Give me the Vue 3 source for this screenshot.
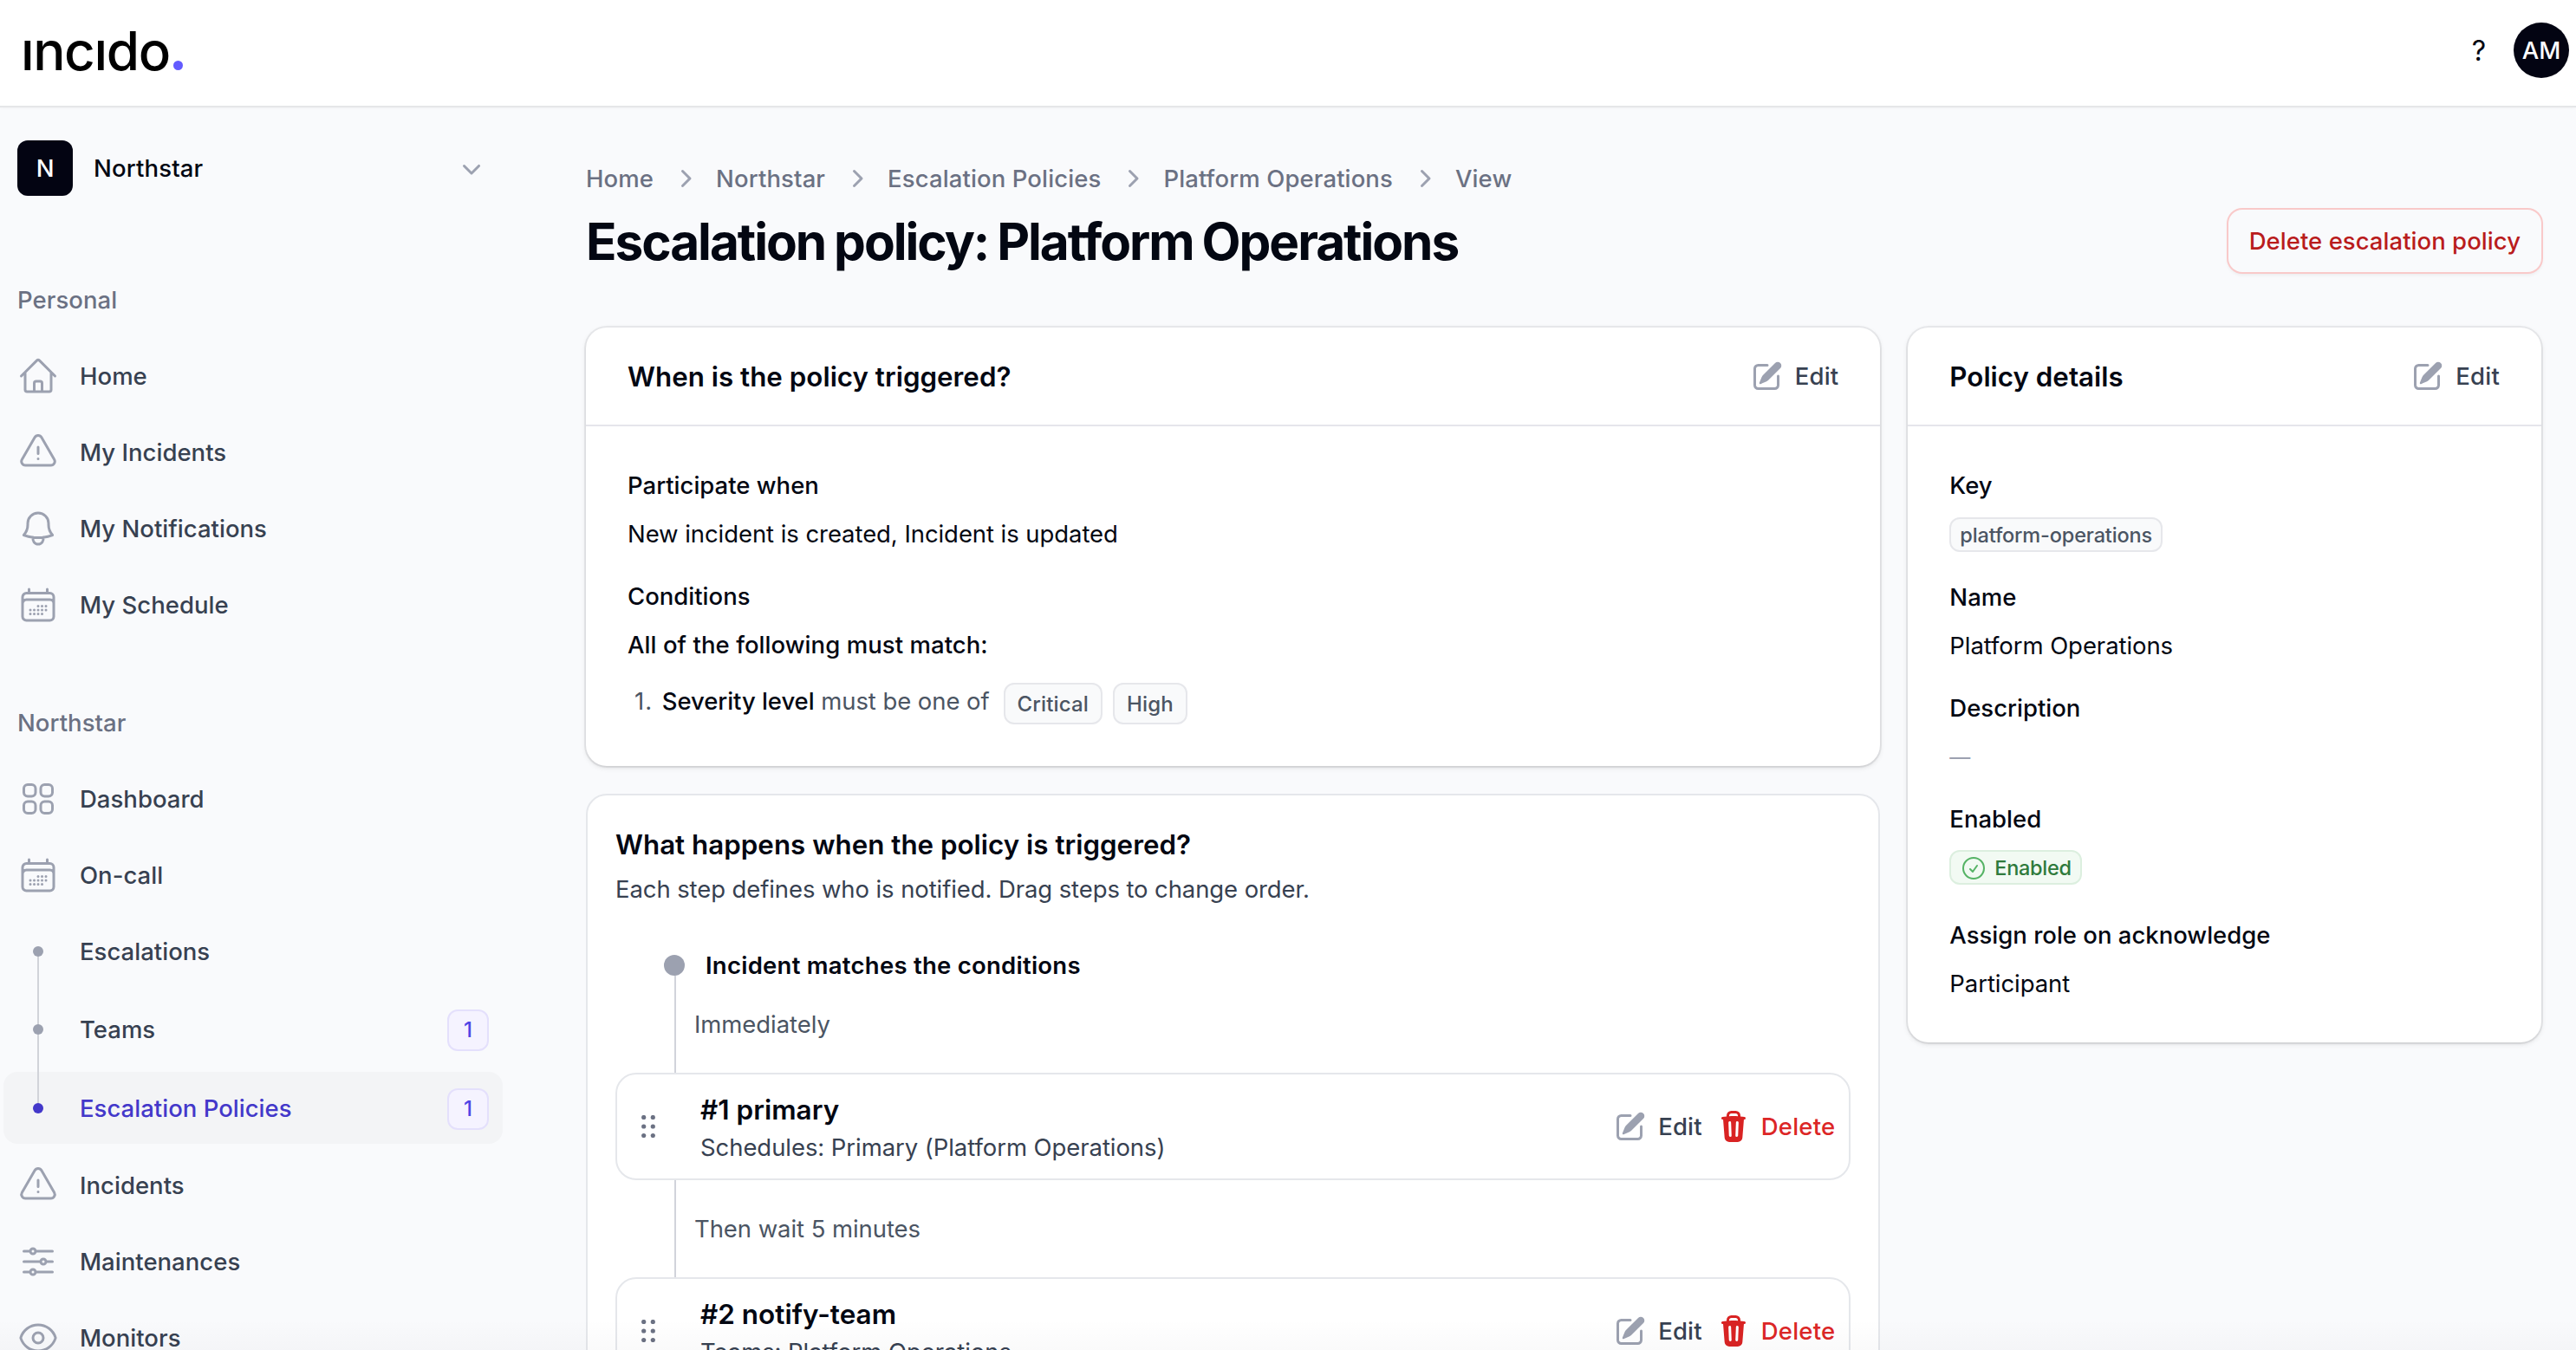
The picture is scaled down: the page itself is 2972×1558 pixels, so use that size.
<script setup>
const icons = {
  home: 'm2.25 12 8.954-8.955c.44-.439 1.152-.439 1.591 0L21.75 12M4.5 9.75v10.125c0 .621.504 1.125 1.125 1.125H9.75v-4.875c0-.621.504-1.125 1.125-1.125h2.25c.621 0 1.125.504 1.125 1.125V21h4.125c.621 0 1.125-.504 1.125-1.125V9.75M8.25 21h8.25',
  alert: 'M12 9v3.75m-9.303 3.376c-.866 1.5.217 3.374 1.948 3.374h14.71c1.73 0 2.813-1.874 1.948-3.374L13.949 3.378c-.866-1.5-3.032-1.5-3.898 0L2.697 16.126ZM12 15.75h.007v.008H12v-.008Z',
  bell: 'M14.857 17.082a23.848 23.848 0 0 0 5.454-1.31A8.967 8.967 0 0 1 18 9.75V9A6 6 0 0 0 6 9v.75a8.967 8.967 0 0 1-2.312 6.022c1.733.64 3.56 1.085 5.455 1.31m5.714 0a24.255 24.255 0 0 1-5.714 0m5.714 0a3 3 0 1 1-5.714 0',
  calendar: 'M6.75 3v2.25M17.25 3v2.25M3 18.75V7.5a2.25 2.25 0 0 1 2.25-2.25h13.5A2.25 2.25 0 0 1 21 7.5v11.25m-18 0A2.25 2.25 0 0 0 5.25 21h13.5A2.25 2.25 0 0 0 21 18.75m-18 0v-7.5A2.25 2.25 0 0 1 5.25 9h13.5A2.25 2.25 0 0 1 21 11.25v7.5m-9-6h.008v.008H12v-.008ZM12 15h.008v.008H12V15Zm0 2.25h.008v.008H12v-.008ZM9.75 15h.008v.008H9.75V15Zm0 2.25h.008v.008H9.75v-.008ZM7.5 15h.008v.008H7.5V15Zm0 2.25h.008v.008H7.5v-.008Zm6.75-4.5h.008v.008h-.008v-.008Zm0 2.25h.008v.008h-.008V15Zm0 2.25h.008v.008h-.008v-.008Zm2.25-4.5h.008v.008H16.5v-.008Zm0 2.25h.008v.008H16.5V15Z',
  squares: 'M3.75 6A2.25 2.25 0 0 1 6 3.75h2.25A2.25 2.25 0 0 1 10.5 6v2.25a2.25 2.25 0 0 1-2.25 2.25H6a2.25 2.25 0 0 1-2.25-2.25V6ZM3.75 15.75A2.25 2.25 0 0 1 6 13.5h2.25a2.25 2.25 0 0 1 2.25 2.25V18a2.25 2.25 0 0 1-2.25 2.25H6A2.25 2.25 0 0 1 3.75 18v-2.25ZM13.5 6a2.25 2.25 0 0 1 2.25-2.25H18A2.25 2.25 0 0 1 20.25 6v2.25A2.25 2.25 0 0 1 18 10.5h-2.25a2.25 2.25 0 0 1-2.25-2.25V6ZM13.5 15.75a2.25 2.25 0 0 1 2.25-2.25H18a2.25 2.25 0 0 1 2.25 2.25V18A2.25 2.25 0 0 1 18 20.25h-2.25A2.25 2.25 0 0 1 13.5 18v-2.25Z',
  sliders: 'M10.5 6h9.75M10.5 6a1.5 1.5 0 1 1-3 0m3 0a1.5 1.5 0 1 0-3 0M3.75 6H7.5m3 12h9.75m-9.75 0a1.5 1.5 0 0 1-3 0m3 0a1.5 1.5 0 0 0-3 0m-3.75 0H7.5m9-6h3.75m-3.75 0a1.5 1.5 0 0 1-3 0m3 0a1.5 1.5 0 0 0-3 0m-9.75 0h9.75',
  eye: 'M2.036 12.322a1.012 1.012 0 0 1 0-.639C3.423 7.51 7.36 4.5 12 4.5c4.638 0 8.573 3.007 9.963 7.178.07.207.07.431 0 .639C20.577 16.49 16.64 19.5 12 19.5c-4.638 0-8.573-3.007-9.963-7.178ZM15 12a3 3 0 1 1-6 0 3 3 0 0 1 6 0Z',
  check: 'M9 12.75 11.25 15 15 9.75M21 12a9 9 0 1 1-18 0 9 9 0 0 1 18 0Z',
}
const pencil =
  'm5.433 13.917 1.262-3.155A4 4 0 0 1 7.58 9.42l6.92-6.918a2.121 2.121 0 0 1 3 3l-6.92 6.918c-.383.383-.84.685-1.343.886l-3.154 1.262a.5.5 0 0 1-.65-.65ZM3.5 5.75c0-.69.56-1.25 1.25-1.25H10A.75.75 0 0 0 10 3H4.75A2.75 2.75 0 0 0 2 5.75v9.5A2.75 2.75 0 0 0 4.75 18h9.5A2.75 2.75 0 0 0 17 15.25V10a.75.75 0 0 0-1.5 0v5.25c0 .69-.56 1.25-1.25 1.25h-9.5c-.69 0-1.25-.56-1.25-1.25v-9.5Z'
const trash =
  'M8.75 1A2.75 2.75 0 0 0 6 3.75v.443c-.795.077-1.584.176-2.365.298a.75.75 0 1 0 .23 1.482l.149-.022.841 10.518A2.75 2.75 0 0 0 7.596 19h4.807a2.75 2.75 0 0 0 2.742-2.53l.841-10.52.149.023a.75.75 0 0 0 .23-1.482A41.03 41.03 0 0 0 14 4.193V3.75A2.75 2.75 0 0 0 11.25 1h-2.5ZM10 4c.84 0 1.673.025 2.5.075V3.75c0-.69-.56-1.25-1.25-1.25h-2.5c-.69 0-1.25.56-1.25 1.25v.325C8.327 4.025 9.16 4 10 4ZM8.58 7.72a.75.75 0 0 0-1.5.06l.3 7.5a.75.75 0 1 0 1.5-.06l-.3-7.5Zm4.34.06a.75.75 0 1 0-1.5-.06l-.3 7.5a.75.75 0 1 0 1.5.06l.3-7.5Z'
const chevronRight =
  'M8.22 5.22a.75.75 0 0 1 1.06 0l4.25 4.25a.75.75 0 0 1 0 1.06l-4.25 4.25a.75.75 0 0 1-1.06-1.06L11.94 10 8.22 6.28a.75.75 0 0 1 0-1.06Z'
const chevronDown =
  'M5.22 8.22a.75.75 0 0 1 1.06 0L10 11.94l3.72-3.72a.75.75 0 1 1 1.06 1.06l-4.25 4.25a.75.75 0 0 1-1.06 0L5.22 9.28a.75.75 0 0 1 0-1.06Z'

const groups = [
  {
    label: 'Personal',
    items: [
      { text: 'Home', icon: 'home' },
      { text: 'My Incidents', icon: 'alert' },
      { text: 'My Notifications', icon: 'bell' },
      { text: 'My Schedule', icon: 'calendar' },
    ],
  },
  {
    label: 'Northstar',
    items: [
      { text: 'Dashboard', icon: 'squares' },
      { text: 'On-call', icon: 'calendar' },
      { text: 'Escalations', sub: 'first' },
      { text: 'Teams', sub: 'mid', badge: 1 },
      { text: 'Escalation Policies', sub: 'last', badge: 1, active: true },
      { text: 'Incidents', icon: 'alert' },
      { text: 'Maintenances', icon: 'sliders' },
      { text: 'Monitors', icon: 'eye' },
    ],
  },
]
const crumbs = ['Home', 'Northstar', 'Escalation Policies', 'Platform Operations', 'View']
const steps = [
  { wait: 'Immediately', title: '#1 primary', detail: 'Schedules: Primary (Platform Operations)' },
  { wait: 'Then wait 5 minutes', title: '#2 notify-team', detail: 'Teams: Platform Operations' },
]
</script>

<template>
  <div class="app">
    <header class="topbar">
      <div class="logo"><span>ıncıdo</span><i class="logo-dot"></i></div>
      <div class="top-actions">
        <span class="help">?</span>
        <span class="avatar">AM</span>
      </div>
    </header>

    <div class="body">
      <aside class="sidebar">
        <div class="tenant">
          <span class="tenant-logo">N</span>
          <span class="tenant-name">Northstar</span>
          <svg class="mini" viewBox="0 0 20 20"><path :d="chevronDown" /></svg>
        </div>
        <nav>
          <section v-for="g in groups" :key="g.label" class="group">
            <div class="group-label">{{ g.label }}</div>
            <ul class="items">
              <li v-for="it in g.items" :key="it.text" class="item" :class="{ active: it.active, badged: it.badge }">
                <svg v-if="it.icon" class="outline" viewBox="0 0 24 24"><path :d="icons[it.icon]" /></svg>
                <span v-else class="rail" :class="it.sub"><i class="dot"></i></span>
                <span class="item-text">{{ it.text }}</span>
                <span v-if="it.badge" class="count">{{ it.badge }}</span>
              </li>
            </ul>
          </section>
        </nav>
      </aside>

      <main class="main">
        <div class="crumbs">
          <template v-for="(c, i) in crumbs" :key="c">
            <svg v-if="i" class="mini" viewBox="0 0 20 20"><path :d="chevronRight" /></svg>
            <span>{{ c }}</span>
          </template>
        </div>
        <div class="heading">
          <h1>Escalation policy: Platform Operations</h1>
          <button class="danger-btn">Delete escalation policy</button>
        </div>

        <div class="grid">
          <div class="col">
            <section class="card">
              <div class="card-head">
                <h2>When is the policy triggered?</h2>
                <span class="link"><svg class="mini" viewBox="0 0 20 20"><path :d="pencil" /></svg>Edit</span>
              </div>
              <div class="card-body">
                <div class="entry">
                  <div class="label">Participate when</div>
                  <div class="value">New incident is created, Incident is updated</div>
                </div>
                <div class="entry">
                  <div class="label">Conditions</div>
                  <div class="value strong">All of the following must match:</div>
                </div>
                <div class="rule">
                  <span class="rule-text"><span class="num">1.</span> <b>Severity level</b> must be one of</span>
                  <span class="tag big">Critical</span>
                  <span class="tag big">High</span>
                </div>
              </div>
            </section>

            <section class="flow">
              <h2>What happens when the policy is triggered?</h2>
              <p class="flow-sub">Each step defines who is notified. Drag steps to change order.</p>
              <div class="start"><i class="start-dot"></i><span>Incident matches the conditions</span></div>
              <template v-for="s in steps" :key="s.title">
                <div class="wait">{{ s.wait }}</div>
                <div class="step">
                  <svg class="grip" viewBox="0 0 16 26">
                    <template v-for="y in [2.5, 13, 23.5]" :key="y">
                      <circle cx="2.7" :cy="y" r="2.6" /><circle cx="13.3" :cy="y" r="2.6" />
                    </template>
                  </svg>
                  <div class="step-main">
                    <div class="step-title">{{ s.title }}</div>
                    <div class="step-detail">{{ s.detail }}</div>
                  </div>
                  <div class="step-actions">
                    <span class="link"><svg class="mini" viewBox="0 0 20 20"><path :d="pencil" /></svg>Edit</span>
                    <span class="link red"><svg class="mini" viewBox="0 0 20 20"><path :d="trash" /></svg>Delete</span>
                  </div>
                </div>
              </template>
            </section>
          </div>

          <section class="card details">
            <div class="card-head">
              <h2>Policy details</h2>
              <span class="link"><svg class="mini" viewBox="0 0 20 20"><path :d="pencil" /></svg>Edit</span>
            </div>
            <div class="card-body">
              <div class="entry">
                <div class="label">Key</div>
                <div class="value key-row"><span class="tag">platform-operations</span></div>
              </div>
              <div class="entry">
                <div class="label">Name</div>
                <div class="value">Platform Operations</div>
              </div>
              <div class="entry">
                <div class="label">Description</div>
                <div class="value muted">—</div>
              </div>
              <div class="entry">
                <div class="label">Enabled</div>
                <div class="value enabled-row">
                  <span class="tag green"><svg viewBox="0 0 24 24"><path :d="icons.check" /></svg>Enabled</span>
                </div>
              </div>
              <div class="entry">
                <div class="label">Assign role on acknowledge</div>
                <div class="value">Participant</div>
              </div>
            </div>
          </section>
        </div>
      </main>
    </div>
    <div class="edge-fade"></div>
  </div>
</template>

<style>
html,
body {
  margin: 0;
  overflow: hidden;
  background: #f9fafc;
}
</style>

<style scoped>
* {
  box-sizing: border-box;
}
.app {
  width: 2972px;
  height: 1558px;
  overflow: hidden;
  position: relative;
  display: flex;
  flex-direction: column;
  background: #f9fafc;
  color: #030712;
  font-family: Inter, "Liberation Sans", sans-serif;
  font-size: 27.5px;
  line-height: 40px;
  letter-spacing: -0.07px;
}
h1,
h2,
p,
ul {
  margin: 0;
  padding: 0;
}
.mini {
  width: 40px;
  height: 40px;
  flex: none;
  fill: #9ca1b0;
  fill-rule: evenodd;
}
.topbar {
  flex: none;
  height: 124px;
  padding: 0 8px 6px 24px;
  display: flex;
  align-items: center;
  justify-content: space-between;
  background: #fff;
  border-bottom: 2px solid #e5e6e8;
  box-shadow: 0 1px 3px rgba(0, 0, 0, 0.03);
}
.logo {
  display: flex;
  align-items: baseline;
  color: #000;
  font-size: 62px;
  line-height: 72px;
  font-weight: 500;
  letter-spacing: -1.4px;
  padding-top: 1px;
}
.logo-dot {
  width: 11px;
  height: 11px;
  border-radius: 50%;
  background: #635bff;
  margin-left: 4px;
}
.top-actions {
  display: flex;
  align-items: center;
  gap: 32px;
}
.help {
  font-size: 32px;
  padding-top: 2px;
}
.avatar,
.tenant-logo {
  width: 64px;
  height: 64px;
  display: flex;
  align-items: center;
  justify-content: center;
  background: #030412;
  color: #fff;
  font-weight: 500;
}
.avatar {
  border-radius: 50%;
}
.body {
  flex: 1;
  min-height: 0;
  display: flex;
}
.sidebar {
  width: 676px;
  flex: none;
  padding: 38px 96px 0 4px;
}
.tenant {
  height: 64px;
  display: flex;
  align-items: center;
  padding: 0 16px;
  gap: 24px;
  margin-bottom: 96px;
}
.tenant-logo {
  border-radius: 12px;
}
.tenant-name {
  flex: 1;
  font-weight: 500;
  letter-spacing: 0.15px;
}
.group {
  margin-bottom: 72px;
}
.group-label {
  height: 48px;
  line-height: 48px;
  padding-left: 16px;
  font-weight: 500;
  color: #6b7183;
  margin-bottom: 24px;
  letter-spacing: 0.05px;
}
.items {
  list-style: none;
  display: flex;
  flex-direction: column;
  gap: 8px;
}
.item {
  height: 80px;
  flex: none;
  display: flex;
  align-items: center;
  gap: 24px;
  padding: 0 16px;
  border-radius: 16px;
  font-weight: 500;
  color: #374151;
  letter-spacing: 0.02px;
}
.item.badged {
  height: 83px;
  padding-top: 1px;
}
.item.active {
  background: #f3f4f6;
  color: #4338ca;
}
.item-text {
  flex: 1;
}
.outline {
  width: 48px;
  height: 48px;
  fill: none;
  stroke: #9ca1b0;
  stroke-width: 1.5;
  stroke-linecap: round;
  stroke-linejoin: round;
}
.rail {
  width: 48px;
  align-self: stretch;
  display: flex;
  align-items: center;
  justify-content: center;
  position: relative;
}
.rail::before {
  content: "";
  position: absolute;
  left: 23px;
  width: 2px;
  top: -5px;
  bottom: -4px;
  background: #d1d3d9;
}
.rail.first::before {
  top: 50%;
}
.rail.last::before {
  bottom: 50%;
}
.dot {
  position: relative;
  width: 12px;
  height: 12px;
  border-radius: 50%;
  background: #9ca1b0;
}
.active .dot {
  background: #4338ca;
}
.count {
  width: 48px;
  height: 48px;
  margin-top: 2px;
  display: flex;
  align-items: center;
  justify-content: center;
  border: 2px solid #e4e0fc;
  border-radius: 12px;
  background: #f5f3ff;
  color: #4f46e5;
  font-size: 24px;
}
.main {
  flex: 1;
  padding: 62px 40px 0 0;
}
.crumbs {
  display: flex;
  align-items: center;
  gap: 16px;
  height: 40px;
  font-weight: 500;
  color: #6b7183;
  margin-bottom: 16px;
  letter-spacing: 0.11px;
}
.heading {
  height: 72px;
  display: flex;
  align-items: center;
  justify-content: space-between;
  margin-bottom: 64px;
}
h1 {
  font-size: 58.5px;
  height: 72px;
  line-height: 73px;
  font-weight: 700;
  letter-spacing: -2.04px;
  word-spacing: -2px;
}
.danger-btn {
  height: 72px;
  padding: 0 24px;
  border: 0;
  border-radius: 16px;
  background: #f9fafc;
  color: #b91c1c;
  font: inherit;
  font-weight: 500;
  letter-spacing: 0.04px;
  box-shadow: 0 0 0 2px #f9c9c9, 0 3px 5px rgba(0, 0, 0, 0.07);
}
.grid {
  display: grid;
  grid-template-columns: 1493.33px 730.67px;
  gap: 32px;
  align-items: start;
}
.col {
  display: flex;
  flex-direction: column;
  gap: 32px;
}
.card {
  border-radius: 24px;
  background: #fff;
  box-shadow: 0 0 0 2px rgba(3, 7, 18, 0.06), 0 2px 6px rgba(0, 0, 0, 0.1), 0 2px 4px -2px rgba(0, 0, 0, 0.1);
}
.card-head {
  height: 114px;
  padding: 0 48px;
  display: flex;
  align-items: center;
  justify-content: space-between;
  border-bottom: 2px solid #e5e5eb;
}
h2 {
  font-size: 31.3px;
  height: 48px;
  line-height: 50px;
  font-weight: 600;
  letter-spacing: 0.02px;
}
.link {
  display: flex;
  align-items: center;
  gap: 12px;
  font-weight: 500;
  letter-spacing: 0.2px;
  color: #374151;
}
.link.red {
  color: #dc2626;
}
.link.red svg {
  fill: #d92323;
}
.card-body {
  padding: 48px;
  display: flex;
  flex-direction: column;
  gap: 32px;
}
.label {
  font-weight: 500;
  margin-bottom: 16px;
  letter-spacing: 0;
}
.strong {
  font-weight: 500;
  letter-spacing: 0.06px;
}
.muted {
  color: #9ca1b0;
  font-size: 24px;
  height: 40px;
  line-height: 42px;
}
.rule {
  display: flex;
  align-items: flex-start;
  gap: 12px;
  height: 48px;
  margin-top: -8px;
  padding-left: 8px;
  color: #4b5563;
}
.rule-text {
  line-height: 43px;
  margin-right: 4px;
}
.num {
  margin-right: 3px;
  letter-spacing: 1px;
}
.rule-text b {
  font-weight: 500;
  color: #030712;
}
.tag {
  display: inline-flex;
  align-items: center;
  height: 40px;
  padding: 1px 10px 0;
  border: 2px solid #e6e7eb;
  border-radius: 12px;
  background: #f9fafb;
  color: #4b5563;
  font-size: 23.5px;
  line-height: 36px;
  font-weight: 500;
  letter-spacing: -0.15px;
}
.tag.big {
  height: 48px;
  padding: 1px 14px 0;
  font-size: 24px;
  letter-spacing: 0.15px;
}
.tag.green {
  gap: 8px;
  color: #2f7a3c;
  background: #f2faf3;
  border-color: #dcefdf;
  letter-spacing: -0.3px;
}
.tag.green svg {
  width: 32px;
  height: 32px;
  fill: none;
  stroke: #55b365;
  stroke-width: 1.5;
  stroke-linecap: round;
  stroke-linejoin: round;
}
.key-row {
  height: 41px;
  display: flex;
  align-items: flex-end;
}
.enabled-row {
  height: 45.5px;
  display: flex;
  align-items: flex-start;
}
.flow {
  border: 2px solid #e5e7eb;
  border-radius: 24px;
  background: #fff;
  padding: 32px;
  height: 900px;
}
.flow-sub {
  margin-top: 8px;
  color: #374151;
  letter-spacing: -0.1px;
}
.start {
  display: flex;
  align-items: center;
  gap: 24px;
  height: 24px;
  margin-top: 56px;
  padding-left: 56px;
  font-weight: 600;
  letter-spacing: 0.25px;
}
.start-dot {
  width: 24px;
  height: 24px;
  border-radius: 50%;
  background: #9ca1b0;
}
.wait {
  height: 112px;
  margin-left: 68px;
  border-left: 2px solid #d1d3db;
  padding-left: 21px;
  line-height: 112px;
  color: #4b5563;
}
.step {
  height: 124px;
  display: flex;
  align-items: center;
  border: 2px solid #e5e7eb;
  border-radius: 24px;
  padding: 0 16px 0 28px;
}
.grip {
  width: 16px;
  height: 26px;
  fill: #6b7183;
  margin-right: 52px;
}
.step-main {
  flex: 1;
}
.step-title {
  font-size: 31.5px;
  height: 48px;
  line-height: 50px;
  font-weight: 600;
  letter-spacing: 0;
}
.step-detail {
  color: #374151;
}
.step-actions {
  display: flex;
  gap: 16px;
}
.edge-fade {
  position: absolute;
  left: 0;
  right: 0;
  bottom: 0;
  height: 36px;
  background: linear-gradient(to bottom, rgba(0, 0, 20, 0), rgba(0, 0, 20, 0.018));
  pointer-events: none;
}
</style>
